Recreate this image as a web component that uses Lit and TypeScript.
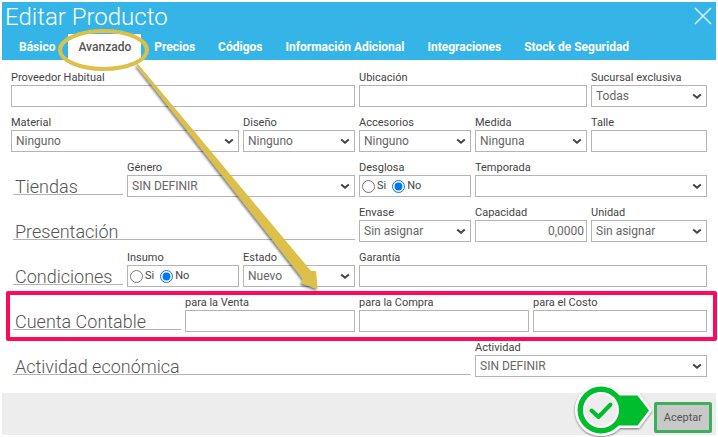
import { LitElement, html, css, svg, nothing } from "lit";
import { customElement, property, state } from "lit/decorators.js";
import { classMap } from "lit/directives/class-map.js";

type Kind = "text" | "select" | "radio" | "title";

interface Cell {
  kind: Kind;
  label: string;
  span: number;
  value?: string;
  numeric?: boolean;
}

const text = (label: string, span: number, value = "", numeric = false): Cell => ({ kind: "text", label, span, value, numeric });
const select = (label: string, span: number, value = ""): Cell => ({ kind: "select", label, span, value });
const radio = (label: string, span: number): Cell => ({ kind: "radio", label, span, value: "No" });
const title = (label: string, span: number): Cell => ({ kind: "title", label, span });

const TABS = ["Básico", "Avanzado", "Precios", "Códigos", "Información Adicional", "Integraciones", "Stock de Seguridad"];

const ROWS: { cells: Cell[]; marked?: boolean }[] = [
  { cells: [text("Proveedor Habitual", 6), text("Ubicación", 4), select("Sucursal exclusiva", 2, "Todas")] },
  {
    cells: [
      select("Material", 4, "Ninguno"),
      select("Diseño", 2, "Ninguno"),
      select("Accesorios", 2, "Ninguno"),
      select("Medida", 2, "Ninguna"),
      text("Talle", 2),
    ],
  },
  { cells: [title("Tiendas", 2), select("Género", 4, "SIN DEFINIR"), radio("Desglosa", 2), select("Temporada", 4)] },
  { cells: [title("Presentación", 6), select("Envase", 2, "Sin asignar"), text("Capacidad", 2, "0,0000", true), select("Unidad", 2, "Sin asignar")] },
  { cells: [title("Condiciones", 2), radio("Insumo", 2), select("Estado", 2, "Nuevo"), text("Garantía", 6)] },
  { cells: [title("Cuenta Contable", 3), text("para la Venta", 3), text("para la Compra", 3), text("para el Costo", 3)], marked: true },
  { cells: [title("Actividad económica", 8), select("Actividad", 4, "SIN DEFINIR")] },
];

@customElement("form-cell")
class FormCell extends LitElement {
  @property({ attribute: false }) cell!: Cell;

  static styles = css`
    :host {
      display: block;
      min-width: 0;
    }
    .label {
      display: block;
      height: 15px;
      padding: 0;
      font-size: 11px;
      line-height: 15px;
      color: #444;
      white-space: nowrap;
    }
    .group {
      margin: 0;
      padding: 0;
      border: 0;
      min-width: 0;
    }
    .box {
      box-sizing: border-box;
      display: block;
      width: 100%;
      height: 22px;
      margin: 0;
      border: 1px solid #b4b4b4;
      border-radius: 0;
      background: #fff;
      color: #666;
      font: 12px/20px Roboto, sans-serif;
    }
    .input {
      padding: 0 2px;
      outline: none;
    }
    .numeric {
      text-align: right;
    }
    .wrap {
      display: grid;
      align-items: center;
    }
    .wrap > * {
      grid-area: 1 / 1;
    }
    .select {
      appearance: none;
      padding: 0 16px 0 4px;
    }
    .chevron {
      justify-self: end;
      margin-right: 5px;
      pointer-events: none;
    }
    .radios {
      display: flex;
      align-items: center;
      gap: 6px;
      padding-left: 2px;
    }
    .option {
      display: flex;
      align-items: center;
      gap: 2px;
      font-size: 11px;
      color: #444;
    }
    .dot {
      width: 13px;
      height: 13px;
      margin: 0;
      accent-color: #0075ff;
    }
    .title {
      box-sizing: border-box;
      height: 20px;
      margin: 15px 0 0 2px;
      padding-left: 2px;
      border-bottom: 1px solid #b4b4b4;
      font-size: 18px;
      line-height: 23px;
      font-weight: 300;
      color: #555;
      white-space: nowrap;
    }
  `;

  render() {
    const c = this.cell;
    if (c.kind === "title") return html`<h2 class="title">${c.label}</h2>`;
    if (c.kind === "radio") {
      return html`<fieldset class="group">
        <legend class="label">${c.label}</legend>
        <div class="box radios">
          ${["Si", "No"].map(
            (o) => html`<label class="option"><input class="dot" type="radio" name="choice" .checked=${o === c.value} />${o}</label>`
          )}
        </div>
      </fieldset>`;
    }
    return html`<label class="label" for="field">${c.label}</label>
      ${c.kind === "text"
        ? html`<input id="field" type="text" class=${classMap({ box: true, input: true, numeric: !!c.numeric })} .value=${c.value ?? ""} />`
        : html`<div class="wrap">
            <select id="field" class="box select"><option>${c.value}</option></select>
            <svg class="chevron" width="10" height="7" viewBox="0 0 10 7" aria-hidden="true">
              <path d="M1.2 1.5 5 4.8 8.8 1.5" fill="none" stroke="#444" stroke-width="2" />
            </svg>
          </div>`}`;
  }
}

@customElement("app-root")
class AppRoot extends LitElement {
  @state() private tab = "Avanzado";

  static styles = css`
    :host {
      display: block;
      position: relative;
      padding: 2px;
      font-family: Roboto, sans-serif;
      background: #fff;
      overflow: hidden;
    }
    .header {
      background: #35b5e7;
      color: #fff;
    }
    .top {
      display: flex;
      justify-content: space-between;
      height: 32px;
      padding: 0 4px 0 3px;
    }
    .heading {
      margin: 0;
      font-size: 24px;
      line-height: 30px;
      font-weight: 300;
    }
    .close {
      width: 18px;
      height: 18px;
      margin-top: 5px;
      padding: 0;
      border: 0;
      background: none;
    }
    .close svg {
      display: block;
    }
    .tabs {
      display: flex;
      gap: 3px;
      height: 26px;
      padding-left: 7px;
    }
    .tab {
      padding: 0 10px;
      border: 0;
      background: none;
      color: #fff;
      font: 700 12px/26px Roboto, sans-serif;
      white-space: nowrap;
    }
    .active {
      background: #fff;
      color: #555;
      font-weight: 500;
    }
    .form {
      padding: 10px 9px 0;
    }
    .row {
      position: relative;
      display: grid;
      grid-template-columns: repeat(12, minmax(0, 1fr));
      padding-bottom: 8px;
    }
    .cell {
      margin-right: 4px;
    }
    .cell:last-of-type {
      margin-right: 0;
    }
    .mark {
      position: absolute;
      inset: -4px -10px -1px -5px;
      border: 4px solid #ff0a5a;
      border-radius: 2px;
      pointer-events: none;
    }
    .footer {
      position: relative;
      display: flex;
      justify-content: flex-end;
      margin-top: 8px;
      padding: 9px 4px 2px;
      background: #ededed;
    }
    .accept {
      height: 31px;
      padding: 0 7px;
      border: 3px solid #3fae5a;
      border-radius: 2px;
      background: #c8c8c8;
      color: #555;
      font: 11px/25px Roboto, sans-serif;
    }
    .badge {
      position: absolute;
      right: 60px;
      top: -11px;
    }
    .arrow {
      position: absolute;
      left: 0;
      top: 0;
      pointer-events: none;
    }
  `;

  render() {
    return html`
      <header class="header">
        <div class="top">
          <h1 class="heading">Editar Producto</h1>
          <button class="close" aria-label="Cerrar">
            <svg width="18" height="18" viewBox="0 0 18 18">
              <path d="M1 1 17 17M17 1 1 17" stroke="#fff" stroke-opacity=".8" stroke-width="1.6" />
            </svg>
          </button>
        </div>
        <nav class="tabs">
          ${TABS.map(
            (t) => html`<button class=${classMap({ tab: true, active: t === this.tab })} @click=${() => (this.tab = t)}>${t}</button>`
          )}
        </nav>
      </header>
      <form class="form">
        ${ROWS.map(
          (r) => html`<div class="row">
            ${r.cells.map((c) => html`<form-cell class="cell" style="grid-column: span ${c.span}" .cell=${c}></form-cell>`)}
            ${r.marked ? html`<div class="mark"></div>` : nothing}
          </div>`
        )}
      </form>
      <footer class="footer">
        <svg class="badge" width="86" height="58" viewBox="0 0 86 58" aria-hidden="true">
          <defs>
            <filter id="soft" x="-20%" y="-20%" width="140%" height="140%">
              <feDropShadow dx="0" dy="1" stdDeviation="1.2" flood-color="#000" flood-opacity=".55" />
            </filter>
          </defs>
          <g filter="url(#soft)">
            <path d="M46 11H69L82 28.500 69 46H46Z" fill="#fff" />
            <circle cx="31" cy="28" r="26" fill="#fff" />
          </g>
          <path d="M46 13.500H67.500L79 28.500 67.500 43.500H46Z" fill="#00bd2d" />
          <circle cx="31" cy="28" r="23.500" fill="#00bd2d" />
          <circle cx="31" cy="28" r="18" fill="#fff" />
          <circle cx="31" cy="28" r="16" fill="#ededed" />
          <path d="M21.500 28.500 28.500 35 40.500 22.500" fill="none" stroke="#00bd2d" stroke-width="4" stroke-linecap="round" stroke-linejoin="round" />
        </svg>
        <button class="accept">Aceptar</button>
      </footer>
      <svg class="arrow" width="340" height="300" viewBox="0 0 340 300" aria-hidden="true">
        <defs>
          <filter id="shade" x="-10%" y="-10%" width="120%" height="120%">
            <feDropShadow dx="-1" dy="2" stdDeviation="1" flood-color="#000" flood-opacity=".5" />
          </filter>
        </defs>
        ${svg`<ellipse cx="103.500" cy="50" rx="43.500" ry="19" fill="none" stroke="#dcc04a" stroke-width="4" />
        <path d="M136 65 138 64 311 271 316 271 317.500 289 301 283 303 279Z" fill="#dcc04a" filter="url(#shade)" />`}
      </svg>
    `;
  }
}
